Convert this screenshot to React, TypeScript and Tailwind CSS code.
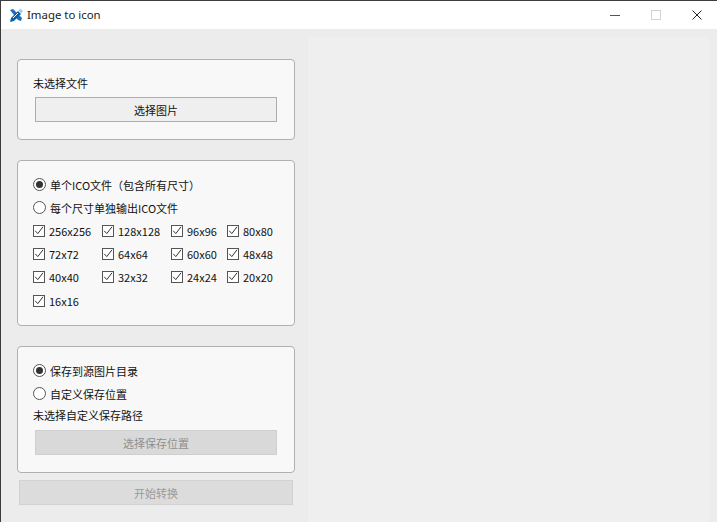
const font = { fontFamily: '"Noto Sans CJK SC", "Noto Sans", sans-serif' };

function Radio({ checked, label }: { checked?: boolean; label: string }) {
  return (
    <div className="flex h-[23px] items-center gap-[4px]">
      <span className="flex h-[13px] w-[13px] items-center justify-center rounded-full border border-[#555555] bg-white">
        {checked && <span className="h-[7px] w-[7px] rounded-full bg-[#333333]" />}
      </span>
      <span>{label}</span>
    </div>
  );
}

function Check({ label, className }: { label: string; className: string }) {
  return (
    <div className={`flex h-[23.4px] items-center gap-[4px] ${className}`}>
      <svg width="12" height="12" viewBox="0 0 12 12" className="shrink-0">
        <rect x="0.5" y="0.5" width="11" height="11" fill="#fff" stroke="#555" />
        <path d="M2.2 5.8 L4.8 8.6 L10 1.8" fill="none" stroke="#333" strokeWidth="1" />
      </svg>
      <span>{label}</span>
    </div>
  );
}

const sizes = ["256x256", "128x128", "96x96", "80x80", "72x72", "64x64", "60x60", "48x48", "40x40", "32x32", "24x24", "20x20", "16x16"];
const cols = ["w-[69px]", "w-[69px]", "w-[56px]", "w-[48px]"];

export default function App() {
  return (
    <div className="flex h-[522px] w-[717px] flex-col overflow-hidden border-t border-l border-[#3c3c3c] bg-[#ececec] text-[11px] leading-[16px] text-[#111111]" style={font}>
      <div className="flex h-[28px] shrink-0 items-center bg-white pl-[8px]">
        <svg width="14" height="15" viewBox="0 0 14 15" className="shrink-0">
          <path d="M1 2 L4 1 L13 10 L12 13 L9 12 Z" fill="#1d6fb8" />
          <path d="M2 10 L9 3 L12 6 L5 13 L1 14 Z" fill="#0f5fa8" />
          <path d="M9.5 2.5 L11 0.5 L14 3 L12.5 5.5 Z" fill="#9ed0ee" />
          <path d="M4 10 L9 5" stroke="#fff" strokeWidth="1" />
        </svg>
        <span className="ml-[4px] text-[11.4px] text-[#222222]" style={{ fontFamily: '"Noto Sans", sans-serif' }}>Image to icon</span>
        <div className="ml-auto flex items-center">
          <span className="mr-[31px] h-[1px] w-[10px] bg-[#555555]" />
          <span className="mr-[31px] h-[10px] w-[10px] border border-[#d4d4d4]" />
          <svg width="10" height="10" viewBox="0 0 10 10" className="mr-[15px]">
            <path d="M0.5 0.5 L9.5 9.5 M9.5 0.5 L0.5 9.5" stroke="#222" strokeWidth="1" fill="none" />
          </svg>
        </div>
      </div>

      <div className="flex min-h-0 flex-1">
        <div className="flex w-[307px] shrink-0 flex-col pt-[30px] pl-[16px]">
          <section className="flex h-[81px] w-[278px] flex-col rounded-[4px] border border-[#b0b0b0] bg-[#f8f8f8] px-[15px] pt-[14px]">
            <div className="h-[20px] leading-[18px]">未选择文件</div>
            <button className="ml-[2px] mt-[3px] h-[25px] w-[242px] border border-[#adadad] bg-[#efefef] text-[11px]">选择图片</button>
          </section>

          <section className="mt-[20px] h-[166px] w-[278px] rounded-[4px] border border-[#b0b0b0] bg-[#f8f8f8] px-[15px] pt-[12px]">
            <Radio checked label="单个ICO文件（包含所有尺寸）" />
            <Radio label="每个尺寸单独输出ICO文件" />
            <div className="flex w-[246px] flex-wrap">
              {sizes.map((s, i) => (
                <Check key={s} label={s} className={cols[i % 4]} />
              ))}
            </div>
          </section>

          <section className="mt-[20px] h-[127px] w-[278px] rounded-[4px] border border-[#b0b0b0] bg-[#f8f8f8] px-[15px] pt-[12px]">
            <Radio checked label="保存到源图片目录" />
            <Radio label="自定义保存位置" />
            <div className="mt-[1px] h-[19px] leading-[18px]">未选择自定义保存路径</div>
            <button className="ml-[2px] mt-[5px] h-[25px] w-[242px] border border-[#cfcfcf] bg-[#d9d9d9] text-[11px] text-[#8f8f8f]">选择保存位置</button>
          </section>

          <button className="ml-[2px] mt-[7px] h-[25px] w-[274px] border border-[#d2d2d2] bg-[#dcdcdc] text-[11px] text-[#9a9a9a]">开始转换</button>
        </div>
        <div className="mt-[8px] w-[401px] shrink-0 bg-[#efefef]" />
      </div>
    </div>
  );
}
